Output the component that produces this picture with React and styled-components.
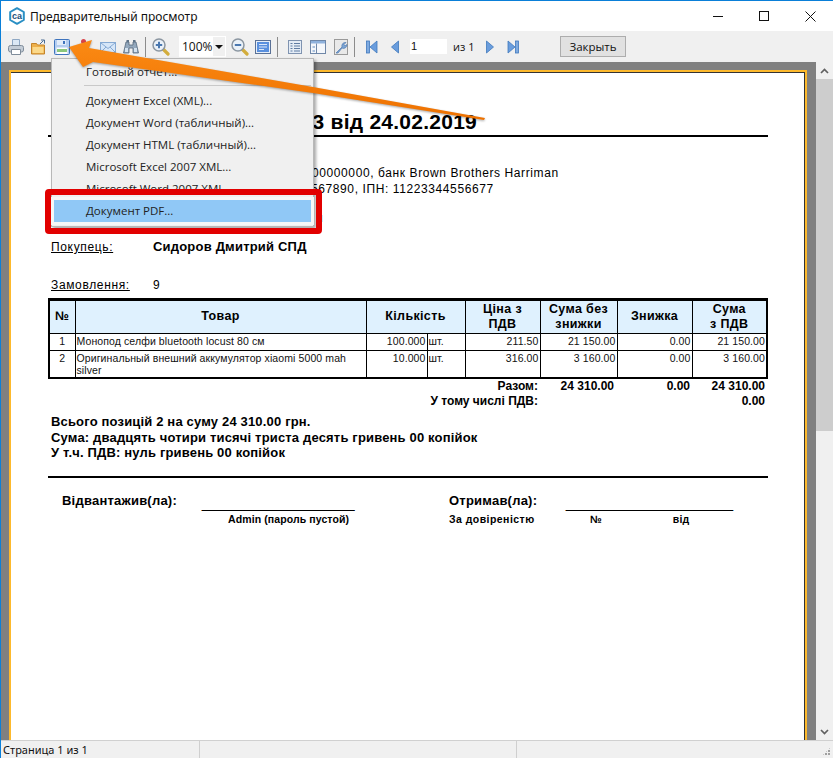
import React from 'react'
import styled, { createGlobalStyle } from 'styled-components'

const GlobalStyle = createGlobalStyle`
  html, body { margin: 0; padding: 0; background: #fff; overflow: hidden; }
  * { box-sizing: border-box; }
`

const rows = [
  { n: 1, name: 'Монопод селфи bluetooth locust 80 см', qty: '100.000', unit: 'шт.', price: '211.50', sum: '21 150.00', disc: '0.00', total: '21 150.00' },
  { n: 2, name: 'Оригинальный внешний аккумулятор xiaomi 5000 mah silver', qty: '10.000', unit: 'шт.', price: '316.00', sum: '3 160.00', disc: '0.00', total: '3 160.00' },
]

const menuItems = ['Документ Excel (XML)...', 'Документ Word (табличный)...', 'Документ HTML (табличный)...', 'Microsoft Excel 2007 XML...', 'Microsoft Word 2007 XML...']

const Logo = () => (
  <svg width="18" height="18" viewBox="0 0 18 18">
    <path d="M9 1.2 15.800 5v8L9 16.800 2.200 13V5z" fill="#fff" stroke="#2a8fc4" strokeWidth="2" strokeLinejoin="round" />
    <text x="9" y="12" textAnchor="middle" fontFamily="Liberation Sans, sans-serif" fontSize="9" fontWeight="700" fill="#1c4f78">ca</text>
  </svg>
)

const PrintIcon = () => (
  <svg width="16" height="16" viewBox="0 0 16 16">
    <path d="M4.500.5h7v7h-7z" fill="#dbe8f5" stroke="#8fa8c4" />
    <rect x=".5" y="6.500" width="15" height="6.500" rx="2" fill="#c3ccd6" stroke="#7f8c9a" />
    <path d="M3.500 10.500h9v5h-9z" fill="#fff" stroke="#7f8c9a" />
  </svg>
)
const FolderIcon = () => (
  <svg width="16" height="16" viewBox="0 0 16 16">
    <path d="M.5 4.500h5l1 1.500h7v9H.5z" fill="#eeb04a" stroke="#c4842a" />
    <path d="M1.500 8h11v6h-11z" fill="#fbd98a" />
    <path d="M9 5l3.500-3.500M10 1h3.500v3.500" stroke="#4a6d95" fill="none" />
  </svg>
)
const SaveIcon = () => (
  <svg width="16" height="16" viewBox="0 0 16 16">
    <rect x=".5" y=".5" width="15" height="15" rx="1" fill="#b4cdf0" stroke="#3f74bd" />
    <rect x="3" y="1" width="9" height="5" fill="#e2ecf9" />
    <rect x="9" y="2" width="2" height="3" fill="#3f74bd" />
    <rect x="2.500" y="8.500" width="11" height="6.500" fill="#fff" />
    <rect x="3" y="10" width="10" height="3" fill="#8ac77b" />
  </svg>
)
const ExportIcon = () => (
  <svg width="16" height="16" viewBox="0 0 16 16">
    <circle cx="6.500" cy="2.500" r="2.500" fill="#d8434a" />
  </svg>
)
const MailIcon = () => (
  <svg width="16" height="16" viewBox="0 0 16 16">
    <rect x=".5" y="3.500" width="15" height="10" fill="#d6e6f8" stroke="#86aad4" />
    <path d="M1 4l7 5.500L15 4M1 13l5-5M15 13l-5-5" fill="none" stroke="#86aad4" />
  </svg>
)
const BinocularsIcon = () => (
  <svg width="16" height="16" viewBox="0 0 16 16">
    <path d="M3 3h3v3h4V3h3l2.500 11h-5.500V9H6v5H.5z" fill="#93a8bd" stroke="#55687c" strokeWidth=".8" />
    <path d="M3.500 1h2.500v2H3.500zM10 1h2.500v2H10z" fill="#5f7388" />
    <path d="M2 9h3v4H2zM11 9h3v4h-3z" fill="#d3e2f0" />
  </svg>
)
const ZoomIcon = ({ plus }) => (
  <svg width="18" height="18" viewBox="0 0 18 18">
    <path d="M11 11l5 5" stroke="#d3ad3c" strokeWidth="3.200" strokeLinecap="round" />
    <circle cx="7" cy="7" r="6" fill="#eaf1f8" stroke="#8b96a1" strokeWidth="1.500" />
    <path d={plus ? 'M3.800 7h6.400M7 3.800v6.400' : 'M3.800 7h6.400'} stroke="#4a78b0" strokeWidth="2" />
  </svg>
)
const FitIcon = () => (
  <svg width="16" height="16" viewBox="0 0 16 16">
    <rect x=".5" y="1.500" width="15" height="13" fill="#e8eff8" stroke="#5a7196" />
    <rect x="2" y="3" width="12" height="10" fill="#5a90de" />
    <path d="M4 5.500h8M4 8h8M4 10.500h5" stroke="#dce8fa" />
  </svg>
)
const OutlineIcon = () => (
  <svg width="16" height="16" viewBox="0 0 16 16">
    <rect x="1.500" y="1.500" width="13" height="13" fill="#e4ecf6" stroke="#7f93b0" />
    <path d="M3.500 4.500h2M7 4.500h6M3.500 7h2M7 7h6M3.500 9.500h2M7 9.500h6M3.500 12h2M7 12h6" stroke="#5f7ca3" />
  </svg>
)
const ThumbsIcon = () => (
  <svg width="16" height="16" viewBox="0 0 16 16">
    <rect x=".5" y="1.500" width="15" height="13" fill="#f4f7fb" stroke="#6f87a8" />
    <rect x="1" y="2" width="14" height="2.500" fill="#8fb2dd" />
    <path d="M6.500 4.500v10" stroke="#6f87a8" />
    <path d="M2.500 7h2.500v2H2.500zM2.500 11h2.500v2H2.500z" fill="#a9c0dc" />
  </svg>
)
const WrenchIcon = () => (
  <svg width="16" height="16" viewBox="0 0 16 16">
    <rect x="1.500" y=".5" width="13" height="15" fill="#e9e9e9" stroke="#9a9a9a" />
    <path d="M3 14l6-6a3.500 3.500 0 0 1 4-4.500L11 5.500l1 1.500 2-1.500a3.500 3.500 0 0 1-5 3.500l-4 5z" fill="#7da6d6" stroke="#4f79ad" strokeWidth=".7" />
  </svg>
)
const NavIcon = ({ dir, edge }) => (
  <svg width="12" height="14" viewBox="0 0 12 14" style={{ transform: dir === 'right' ? 'scaleX(-1)' : undefined }}>
    {edge && <rect x=".5" y="1" width="3" height="12" fill="#7eaae0" stroke="#3f78bd" strokeWidth=".8" />}
    <path d={edge ? 'M11 1v12L4 7z' : 'M9.500 1v12L2.500 7z'} fill="#6a9ddd" stroke="#3f78bd" strokeWidth=".8" strokeLinejoin="round" />
  </svg>
)
const Chevron = ({ down }) => (
  <svg width="9" height="6" viewBox="0 0 9 6">
    <path d={down ? 'M1 1l3.500 3.500L8 1' : 'M1 5l3.500-3.500L8 5'} fill="none" stroke="#606060" strokeWidth="1.700" />
  </svg>
)

const App = () => (
  <Window>
    <GlobalStyle />
    <TitleBar>
      <Logo />
      <TitleText>Предварительный просмотр</TitleText>
      <WinButtons>
        <WinButton>
          <svg width="11" height="11" viewBox="0 0 11 11"><path d="M0 5.500h10" stroke="#111" /></svg>
        </WinButton>
        <WinButton>
          <svg width="11" height="11" viewBox="0 0 11 11"><rect x=".5" y=".5" width="9" height="9" fill="none" stroke="#111" /></svg>
        </WinButton>
        <WinButton>
          <svg width="11" height="11" viewBox="0 0 11 11"><path d="M.5.500l10 10M10.500.500l-10 10" stroke="#111" /></svg>
        </WinButton>
      </WinButtons>
    </TitleBar>

    <Toolbar>
      <ToolButton><PrintIcon /></ToolButton>
      <ToolButton><FolderIcon /></ToolButton>
      <ToolButton><SaveIcon /></ToolButton>
      <ToolButton><ExportIcon /></ToolButton>
      <ToolButton><MailIcon /></ToolButton>
      <ToolButton><BinocularsIcon /></ToolButton>
      <ToolSep />
      <ToolButton><ZoomIcon plus /></ToolButton>
      <ZoomCombo>
        <span>100%</span>
        <ComboArrow />
      </ZoomCombo>
      <ToolButton $ml={2}><ZoomIcon /></ToolButton>
      <ToolButton><FitIcon /></ToolButton>
      <ToolSep />
      <ToolButton $ml={2}><OutlineIcon /></ToolButton>
      <ToolButton><ThumbsIcon /></ToolButton>
      <ToolButton><WrenchIcon /></ToolButton>
      <ToolSep $ml={2} />
      <ToolButton $ml={2}><NavIcon edge /></ToolButton>
      <ToolButton><NavIcon /></ToolButton>
      <PageInput>1</PageInput>
      <PageCount>из 1</PageCount>
      <ToolButton><NavIcon dir="right" /></ToolButton>
      <ToolButton><NavIcon dir="right" edge /></ToolButton>
      <CloseButton>Закрыть</CloseButton>
    </Toolbar>

    <Viewer>
      <PageArea>
        <Page>
          <Heading>№ 3 від 24.02.2019</Heading>
          <Supplier>
            <SupplierLine $pad={264}>00000000, банк Brown Brothers Harriman</SupplierLine>
            <SupplierLine $pad={263}>567890, ІПН: 11223344556677</SupplierLine>
            <SupplierTail>и</SupplierTail>
          </Supplier>
          <Party>
            <PartyLabel>Покупець:</PartyLabel>
            <PartyName>Сидоров Дмитрий СПД</PartyName>
          </Party>
          <OrderRow>
            <PartyLabel>Замовлення:</PartyLabel>
            <span>9</span>
          </OrderRow>

          <TableFrame>
            <Table>
              <colgroup>
                {[25, 291, 61, 38, 75, 77, 75, 74].map((w, i) => <col key={i} width={w} />)}
              </colgroup>
              <thead>
                <tr>
                  <Th>№</Th>
                  <Th>Товар</Th>
                  <Th colSpan={2}>Кількість</Th>
                  <Th>Ціна з<br />ПДВ</Th>
                  <Th>Сума без<br />знижки</Th>
                  <Th>Знижка</Th>
                  <Th>Сума<br />з ПДВ</Th>
                </tr>
              </thead>
              <tbody>
                {rows.map(r => (
                  <tr key={r.n}>
                    <Td $align="center">{r.n}</Td>
                    <Td>{r.name}</Td>
                    <Td $align="right">{r.qty}</Td>
                    <Td>{r.unit}</Td>
                    <Td $align="right">{r.price}</Td>
                    <Td $align="right">{r.sum}</Td>
                    <Td $align="right">{r.disc}</Td>
                    <Td $align="right">{r.total}</Td>
                  </tr>
                ))}
              </tbody>
            </Table>
          </TableFrame>

          <Totals>
            <span>Разом:</span><span>24 310.00</span><span>0.00</span><span>24 310.00</span>
            <span>У тому числі ПДВ:</span><span /><span /><span>0.00</span>
          </Totals>

          <Summary>
            <div>Всього позицій 2 на суму 24 310.00 грн.</div>
            <div>Сума: двадцять чотири тисячі триста десять гривень 00 копійок</div>
            <div>У т.ч. ПДВ: нуль гривень 00 копійок</div>
          </Summary>

          <Signatures>
            <SignLabel $pad={14}>Відвантажив(ла):</SignLabel>
            <SignLine>_____________________</SignLine>
            <SignLabel>Отримав(ла):</SignLabel>
            <SignLine>_______________________</SignLine>
            <span />
            <Caption $pad={26} $ls={0.1}>Admin (пароль пустой)</Caption>
            <Caption $ls={0.45}>За довіреністю</Caption>
            <CaptionPair>
              <Caption>№</Caption>
              <Caption>від</Caption>
            </CaptionPair>
          </Signatures>
        </Page>
      </PageArea>
      <Scrollbar>
        <ScrollArrow><Chevron /></ScrollArrow>
        <ScrollTrack><ScrollThumb /></ScrollTrack>
        <ScrollArrow><Chevron down /></ScrollArrow>
      </Scrollbar>
    </Viewer>

    <StatusBar>
      <StatusCell $w={199}>Страница 1 из 1</StatusCell>
      <StatusCell $w={317} />
      <Grip />
    </StatusBar>

    <SaveMenu>
      <MenuItem>Готовый отчет...</MenuItem>
      <MenuSep />
      {menuItems.map(item => <MenuItem key={item}>{item}</MenuItem>)}
      <MenuItem $active>Документ PDF...</MenuItem>
    </SaveMenu>
    <RedFrame />
    <Arrow viewBox="0 0 833 758" width="833" height="758">
      <defs>
        <linearGradient id="arrowFill" x1="0" y1="0" x2="0" y2="1">
          <stop offset="0" stopColor="#fb8a14" />
          <stop offset="1" stopColor="#ee7100" />
        </linearGradient>
      </defs>
      <polygon points="69,47 92,40 89,48 313,87 485,118 484,120 313,93 93,62 83,67" fill="url(#arrowFill)" />
    </Arrow>
  </Window>
)

export default App

const Window = styled.div`
  position: relative;
  width: 833px;
  height: 758px;
  display: flex;
  flex-direction: column;
  overflow: hidden;
  border-top: 1px solid #0a7fd8;
  border-left: 1px solid #0a7fd8;
  background: #f0f0f0;
  font-family: "Open Sans", "Noto Sans", sans-serif;
  font-size: 12px;
  color: #111;
`
const TitleBar = styled.div`
  height: 30px;
  display: flex;
  align-items: center;
  padding-left: 7px;
  background: #fff;
`
const TitleText = styled.div`
  margin-left: 4px;
  font-family: "Noto Sans", sans-serif;
  font-size: 12px;
`
const WinButtons = styled.div`
  margin-left: auto;
  display: flex;
`
const WinButton = styled.div`
  width: 46px;
  height: 30px;
  display: flex;
  align-items: center;
  justify-content: center;
`
const Toolbar = styled.div`
  height: 31px;
  display: flex;
  align-items: center;
  padding-left: 3px;
  background: #f0f0f0;
`
const ToolButton = styled.div`
  width: 23px;
  height: 22px;
  flex: none;
  display: flex;
  align-items: center;
  justify-content: center;
  margin-left: ${props => props.$ml || 0}px;
`
const ToolSep = styled.div`
  width: 1px;
  height: 20px;
  flex: none;
  background: #8c8c8c;
  margin: 0 3px 0 ${props => props.$ml || 3}px;
`
const ZoomCombo = styled.div`
  width: 47px;
  height: 21px;
  margin-left: 7px;
  flex: none;
  display: flex;
  align-items: center;
  justify-content: space-between;
  padding-left: 3px;
  background: #fff;
  font-size: 12px;
`
const ComboArrow = styled.div`
  width: 12px;
  height: 19px;
  margin-right: 1px;
  background: #f0f0f0;
  position: relative;
  &::after {
    content: "";
    position: absolute;
    left: 2px;
    top: 8px;
    border: 4px solid transparent;
    border-top-color: #111;
    border-bottom: 0;
  }
`
const PageInput = styled.div`
  width: 37px;
  height: 15px;
  margin-left: 4px;
  flex: none;
  padding-left: 1px;
  background: #fff;
  font-family: "Liberation Sans", sans-serif;
  font-size: 11px;
  line-height: 15px;
`
const PageCount = styled.div`
  width: 25px;
  margin-left: 6px;
  flex: none;
  font-size: 11px;
`
const CloseButton = styled.div`
  width: 66px;
  height: 21px;
  margin-left: 36px;
  flex: none;
  display: flex;
  align-items: center;
  justify-content: center;
  border: 1px solid #adadad;
  background: #e1e1e1;
  font-size: 11.500px;
`
const Viewer = styled.div`
  flex: 1;
  min-height: 0;
  display: flex;
  background: #808080;
`
const PageArea = styled.div`
  flex: 1;
  min-width: 0;
  overflow: hidden;
  padding: 8px 9px 0 8px;
`
const Page = styled.div`
  height: 900px;
  padding: 35px 37px 0 37px;
  background: #fff;
  border: 2px solid #fdb92c;
  box-shadow: inset -1px 1px 0 #333;
  font-family: "Liberation Sans", Arial, sans-serif;
  color: #000;
`
const Heading = styled.div`
  height: 30px;
  padding-right: 291px;
  text-align: right;
  border-bottom: 2px solid #000;
  font-size: 21px;
  font-weight: 700;
  letter-spacing: .25px;
  line-height: 30px;
  white-space: nowrap;
`
const Supplier = styled.div`
  margin-top: 28px;
  font-size: 12px;
  line-height: 16px;
  letter-spacing: .6px;
  white-space: nowrap;
`
const SupplierLine = styled.div`
  padding-left: ${props => props.$pad}px;
`
const SupplierTail = styled.div`
  margin-top: 13px;
  padding-left: 268px;
  color: #1c2a5a;
`
const Party = styled.div`
  margin-top: 13px;
  padding-left: 3px;
  display: flex;
  font-size: 12px;
  line-height: 16px;
  letter-spacing: .65px;
`
const PartyLabel = styled.span`
  width: 102px;
  flex: none;
  text-decoration: underline;
`
const PartyName = styled.span`
  font-size: 13px;
  font-weight: 700;
  letter-spacing: .2px;
`
const OrderRow = styled(Party)`
  margin-top: 22px;
`
const TableFrame = styled.div`
  margin-top: 5px;
  border: 2px solid #000;
  border-top-width: 3px;
`
const Table = styled.table`
  width: 716px;
  table-layout: fixed;
  border-collapse: collapse;
`
const Th = styled.th`
  height: 32px;
  padding: 0;
  background: #dff1fe;
  border: 1px solid #000;
  border-top: 0;
  font-size: 12.500px;
  font-weight: 700;
  letter-spacing: .35px;
  line-height: 15px;
  text-align: center;
  &:first-child { border-left: 0; }
  &:last-child { border-right: 0; }
`
const Td = styled.td`
  padding: 1px 1px 0;
  border: 1px solid #000;
  font-size: 10.500px;
  letter-spacing: .1px;
  line-height: 12px;
  height: 17px;
  vertical-align: top;
  text-align: ${props => props.$align || 'left'};
  color: #111;
  &:first-child { border-left: 0; }
  &:last-child { border-right: 0; }
  tr:last-child & { border-bottom: 0; height: 27px; }
`
const Totals = styled.div`
  margin-top: 0;
  display: grid;
  grid-template-columns: 1fr 76px 76px 75px;
  grid-auto-rows: 15px;
  font-size: 12px;
  font-weight: 700;
  line-height: 15px;
  span { text-align: right; padding-right: 3px; }
`
const Summary = styled.div`
  margin-top: 5px;
  padding-left: 3px;
  font-size: 13px;
  font-weight: 700;
  letter-spacing: .17px;
  line-height: 15.500px;
  white-space: nowrap;
`
const Signatures = styled.div`
  margin-top: 15px;
  padding-top: 14px;
  border-top: 2px solid #000;
  display: grid;
  grid-template-columns: 154px 247px 117px 1fr;
  grid-template-rows: 17px 21px;
  font-size: 13px;
  font-weight: 700;
  letter-spacing: .22px;
  align-items: center;
`
const SignLabel = styled.span`
  padding-left: ${props => props.$pad || 0}px;
  white-space: nowrap;
`
const SignLine = styled.span`
  padding-top: 6px;
  font-size: 15px;
  letter-spacing: -1.140px;
  line-height: 17px;
  white-space: nowrap;
  -webkit-text-stroke: .5px #000;
`
const Caption = styled.span`
  padding-left: ${props => props.$pad || 0}px;
  font-size: 10.500px;
  letter-spacing: ${props => props.$ls ?? 0.15}px;
  white-space: nowrap;
`
const CaptionPair = styled.div`
  display: flex;
  padding-left: 24px;
  gap: 71px;
`
const Scrollbar = styled.div`
  width: 17px;
  flex: none;
  display: flex;
  flex-direction: column;
  background: #f0f0f0;
`
const ScrollArrow = styled.div`
  height: 17px;
  flex: none;
  display: flex;
  align-items: center;
  justify-content: center;
`
const ScrollTrack = styled.div`
  flex: 1;
`
const ScrollThumb = styled.div`
  height: 352px;
  background: #cdcdcd;
`
const StatusBar = styled.div`
  height: 18px;
  flex: none;
  display: flex;
  position: relative;
  border-top: 1px solid #d0d0d0;
  background: #f0f0f0;
  font-family: "Noto Sans", sans-serif;
  font-size: 11px;
  line-height: 17px;
`
const StatusCell = styled.div`
  width: ${props => props.$w}px;
  padding-left: 2px;
  border-right: 1px solid #cfcfcf;
  white-space: nowrap;
`
const Grip = styled.div`
  position: absolute;
  right: 2px;
  bottom: 2px;
  width: 9px;
  height: 9px;
  background: radial-gradient(circle at 1px 1px, #a0a0a0 1px, transparent 1px) 0 0 / 3px 3px;
  clip-path: polygon(100% 0, 100% 100%, 0 100%);
`
const SaveMenu = styled.div`
  position: absolute;
  left: 50px;
  top: 57px;
  width: 263px;
  height: 169px;
  padding: 1px 2px;
  background: #f0f0f0;
  border: 1px solid #b8b8b8;
  box-shadow: 2px 2px 3px rgba(0, 0, 0, .35);
`
const MenuItem = styled.div`
  height: 22px;
  padding-left: 32px;
  margin-top: ${props => props.$active ? 1 : 0}px;
  padding-bottom: ${props => props.$active ? 2 : 0}px;
  width: ${props => props.$active ? '257px' : 'auto'};
  display: flex;
  align-items: center;
  font-size: 11.500px;
  color: #222;
  position: relative;
  background: ${props => props.$active ? '#90c8f6' : 'transparent'};
  box-shadow: ${props => props.$active ? '0 0 0 3px #f7f7f7' : 'none'};
  z-index: ${props => props.$active ? 1 : 0};
`
const MenuSep = styled.div`
  height: 1px;
  margin: 3px 0 3px 30px;
  background: #c9c9c9;
`
const RedFrame = styled.div`
  position: absolute;
  left: 44px;
  top: 188px;
  width: 277px;
  height: 45px;
  border: 6px solid #e20000;
  border-radius: 4px;
`
const Arrow = styled.svg`
  position: absolute;
  left: -1px;
  top: -1px;
  pointer-events: none;
  filter: drop-shadow(0 1px 1px rgba(0, 0, 0, .35));
`
